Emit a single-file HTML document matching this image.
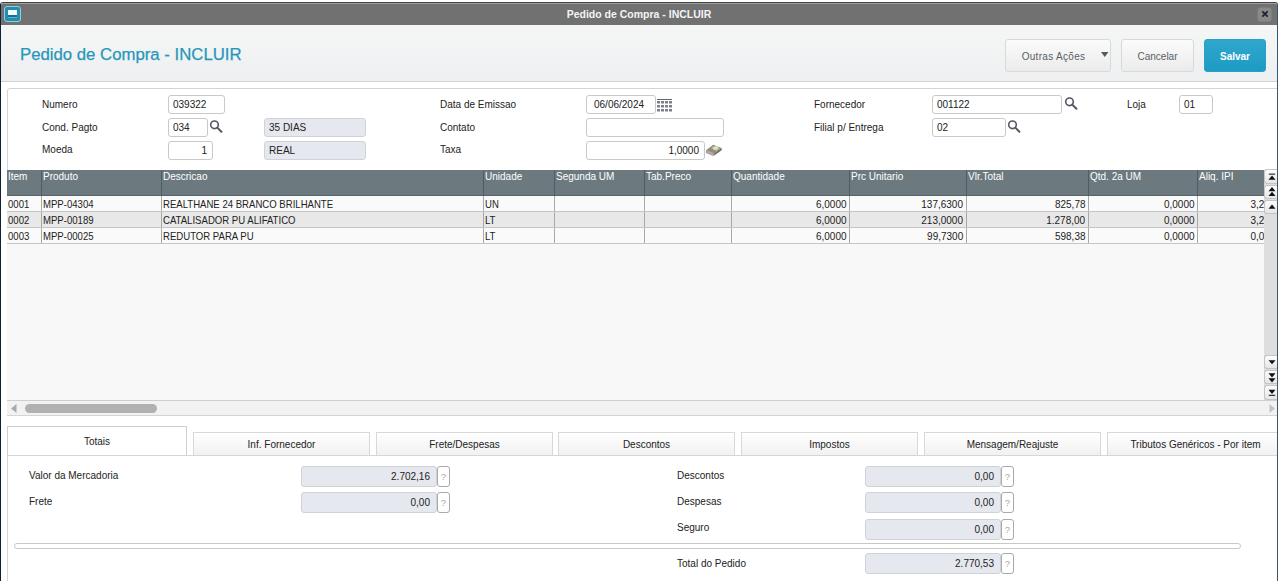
<!DOCTYPE html>
<html><head><meta charset="utf-8">
<style>
*{margin:0;padding:0;box-sizing:border-box}
html,body{width:1280px;height:581px;overflow:hidden;background:#fff;font-family:"Liberation Sans",sans-serif;font-size:10px;color:#222}
div,span,svg{position:absolute}
#win{left:0;top:2px;width:1278px;height:579px;border:1px solid #444;border-bottom:none;background:#fff;border-radius:3px 3px 0 0}
#tb{left:1px;top:3px;width:1276px;height:22px;border-radius:2px 2px 0 0;background:#717171;border-top:1px solid #9e9e9e}
#tbt{left:0;top:4px;width:1276px;text-align:center;color:#f4f4f4;font-weight:bold;font-size:10.5px;line-height:12px}
#hdr{left:1px;top:25px;width:1276px;height:57px;background:linear-gradient(#f5f6f6,#eeeff0);border-bottom:1px solid #d3d3d3}
#ttl{left:20px;top:45px;font-size:16.75px;line-height:19px;color:#2797ba;-webkit-text-stroke:0.25px #2797ba;white-space:nowrap}
.btn{top:39px;height:33px;border:1px solid #d9d9d9;border-radius:3px;background:linear-gradient(#fbfbfb,#ebebeb);font-size:10px;color:#5a5e66;text-align:center;line-height:33px}
.lbl{font-size:10px;line-height:12px;color:#222;white-space:nowrap;margin-top:1px}
.inp{height:19px;border:1px solid #c9c9c9;border-radius:3px;background:#fff;font-size:10px;padding:0 5px 0 4px;line-height:18px;white-space:nowrap;color:#222}
.gry{background:#e5e8ee;border-color:#cfd3d8}
.r{text-align:right;padding-right:5px}
.srch{width:14px;height:14px}
/* grid */
#grid{left:7px;top:170px;width:1257px;height:231px;background:#f8f8f8;overflow:hidden}
#gh{left:0;top:0;width:1257px;height:26px;background:#6c7a80;border-bottom:1px solid #56646a}
.gh{top:0;height:26px;color:#fff;font-size:10px;line-height:12px;padding:1px 0 0 1px;border-left:1px solid #4f5d62;white-space:nowrap;overflow:hidden}
.row{left:0;width:1257px;height:16px;border-bottom:1px solid #c5c5c5}
.c{top:0;height:15px;font-size:10.3px;line-height:15px;padding:1px 3px 0 1px;border-left:1px solid #a8a8a8;white-space:nowrap;overflow:hidden;color:#222}
.c.r{text-align:right}
.c i{font-style:normal;display:inline-block;transform:scaleX(.93);transform-origin:0 50%}
.c.r i{transform:scaleX(.97);transform-origin:100% 50%}
.vsb{left:1264px;width:13px;height:14px;border:1px solid #c4c4c4;border-right:none;border-radius:3px 0 0 3px;background:linear-gradient(#fdfdfd,#e6e6e6)}
/* tabs */
.tab{top:432px;height:23px;border:1px solid #d8d8d8;border-bottom:none;background:linear-gradient(#ffffff,#f1f1f1);font-size:10px;line-height:12px;text-align:center;padding-top:6px;color:#222;white-space:nowrap}
.fld{height:21px;border:1px solid #cfd3d8;border-radius:3px;background:#e5e8ee;font-size:10px;line-height:16px;padding-top:2px;text-align:right;padding-right:6px;color:#222}
.q{width:13px;height:21px;border:1px solid #a9a9a9;border-radius:3px;background:#fff;font-size:9.5px;line-height:19px;text-align:center;color:#a5a5a5}
</style></head><body>
<div id="win"></div>
<div id="tb"><div id="tbt">Pedido de Compra - INCLUIR</div></div>
<!-- window icon -->
<div style="left:4px;top:6px;width:17px;height:16px;border:1px solid #86d2ea;border-radius:3px;background:#2a8cab"></div>
<div style="left:8px;top:10px;width:9px;height:5px;background:#f4fbfd"></div>
<div style="left:8px;top:15px;width:9px;height:2px;background:#17708c"></div>
<div style="left:8px;top:17px;width:9px;height:1px;background:#5fb3cc"></div>
<!-- close -->
<div style="left:1257px;top:7px;width:15px;height:15px;border:1px solid #7c7c7c;border-radius:3px;background:#898989"></div>
<svg style="left:1261px;top:10px" width="8" height="8" viewBox="0 0 8 8"><path d="M1.3 1.3L6.7 6.7M6.7 1.3L1.3 6.7" stroke="#1b2035" stroke-width="1.7"/></svg>

<div id="hdr"></div>
<div id="ttl">Pedido de Compra - INCLUIR</div>
<div class="btn" style="left:1005px;width:106px;padding-right:9px;letter-spacing:0.3px">Outras Ações</div>
<svg style="left:1101px;top:52px" width="8" height="6" viewBox="0 0 8 6"><path d="M0 0H7.5L3.75 5z" fill="#555a60"/></svg>
<div class="btn" style="left:1121px;width:73px">Cancelar</div>
<div class="btn" style="left:1204px;width:62px;background:linear-gradient(#2fa7cd,#1d9bc4);border-color:#2aa0c6;color:#fff;font-weight:bold">Salvar</div>

<!-- form panel -->
<div style="left:7px;top:88px;width:1275px;height:90px;border:1px solid #d4d4d4;border-radius:3px;background:#fff"></div>
<div class="lbl" style="left:42px;top:98px">Numero</div>
<div class="inp" style="left:168px;top:95px;width:57px">039322</div>
<div class="lbl" style="left:42px;top:121px">Cond. Pagto</div>
<div class="inp" style="left:168px;top:118px;width:40px">034</div>
<svg class="srch" style="left:209px;top:119px" viewBox="0 0 14 14"><circle cx="5.5" cy="5.8" r="3.8" fill="none" stroke="#525862" stroke-width="1.6"/><path d="M8.3 8.6L12.4 12.7" stroke="#525862" stroke-width="2" stroke-linecap="round"/></svg>
<div class="inp gry" style="left:264px;top:118px;width:102px">35 DIAS</div>
<div class="lbl" style="left:42px;top:143px">Moeda</div>
<div class="inp r" style="left:168px;top:141px;width:45px">1</div>
<div class="inp gry" style="left:264px;top:141px;width:102px">REAL</div>

<div class="lbl" style="left:440px;top:98px">Data de Emissao</div>
<div class="inp" style="left:586px;top:95px;width:70px;padding-left:7px">06/06/2024</div>
<svg style="left:657px;top:99px" width="16" height="13" viewBox="0 0 16 13"><rect x="0" y="0" width="15" height="1" fill="#666"/><g fill="#7d8088"><rect x="0" y="2" width="3" height="2.5"/><rect x="4" y="2" width="3" height="2.5"/><rect x="8" y="2" width="3" height="2.5"/><rect x="12" y="2" width="3" height="2.5"/><rect x="0" y="6" width="3" height="2.5"/><rect x="4" y="6" width="3" height="2.5"/><rect x="8" y="6" width="3" height="2.5"/><rect x="12" y="6" width="3" height="2.5"/><rect x="0" y="10" width="3" height="2.5"/><rect x="4" y="10" width="3" height="2.5"/><rect x="8" y="10" width="3" height="2.5"/><rect x="12" y="10" width="3" height="2.5"/></g></svg>
<div class="lbl" style="left:440px;top:121px">Contato</div>
<div class="inp" style="left:586px;top:118px;width:138px"></div>
<div class="lbl" style="left:440px;top:143px">Taxa</div>
<div class="inp r" style="left:586px;top:141px;width:119px">1,0000</div>
<svg style="left:705px;top:143px" width="18" height="15" viewBox="0 0 18 15"><path d="M1 7.3L8.2 1.7L16.6 5.1L9 10.5Z" fill="#948a84"/><path d="M1 7.3L9 10.5L8.5 13L1 10Z" fill="#a4959a"/><path d="M9 10.5L16.6 5.1L16.6 7.3L8.5 13Z" fill="#6f6763"/><path d="M2 8.6L8.6 11.2L8.5 11.8L2 9.2Z" fill="#cbbcc0"/><path d="M6 5.2L9 3L15 5.3L11.5 8Z" fill="#b6c58f"/><ellipse cx="10.8" cy="4.9" rx="2.6" ry="1.5" transform="rotate(-20 10.8 4.9)" fill="#dfeac1"/></svg>

<div class="lbl" style="left:814px;top:98px">Fornecedor</div>
<div class="inp" style="left:932px;top:95px;width:130px">001122</div>
<svg class="srch" style="left:1064px;top:96px" viewBox="0 0 14 14"><circle cx="5.5" cy="5.8" r="3.8" fill="none" stroke="#525862" stroke-width="1.6"/><path d="M8.3 8.6L12.4 12.7" stroke="#525862" stroke-width="2" stroke-linecap="round"/></svg>
<div class="lbl" style="left:1127px;top:98px">Loja</div>
<div class="inp" style="left:1179px;top:95px;width:34px">01</div>
<div class="lbl" style="left:814px;top:121px">Filial p/ Entrega</div>
<div class="inp" style="left:932px;top:118px;width:74px">02</div>
<svg class="srch" style="left:1007px;top:119px" viewBox="0 0 14 14"><circle cx="5.5" cy="5.8" r="3.8" fill="none" stroke="#525862" stroke-width="1.6"/><path d="M8.3 8.6L12.4 12.7" stroke="#525862" stroke-width="2" stroke-linecap="round"/></svg>

<!-- grid -->
<div id="grid">
  <div id="gh">
    <div class="gh" style="left:0;width:34px;border-left:none">Item</div>
    <div class="gh" style="left:34px;width:120px">Produto</div>
    <div class="gh" style="left:154px;width:322px">Descricao</div>
    <div class="gh" style="left:476px;width:71px">Unidade</div>
    <div class="gh" style="left:547px;width:90px">Segunda UM</div>
    <div class="gh" style="left:637px;width:87px">Tab.Preco</div>
    <div class="gh" style="left:724px;width:118px">Quantidade</div>
    <div class="gh" style="left:842px;width:117px">Prc Unitario</div>
    <div class="gh" style="left:959px;width:122px">Vlr.Total</div>
    <div class="gh" style="left:1081px;width:109px">Qtd. 2a UM</div>
    <div class="gh" style="left:1190px;width:80px">Aliq. IPI</div>
  </div>
  <div class="row" style="top:26px;background:#fafafa">
    <div class="c" style="left:0;width:34px;border-left:none"><i>0001</i></div>
    <div class="c" style="left:34px;width:120px"><i>MPP-04304</i></div>
    <div class="c" style="left:154px;width:322px"><i>REALTHANE 24 BRANCO BRILHANTE</i></div>
    <div class="c" style="left:476px;width:71px"><i>UN</i></div>
    <div class="c" style="left:547px;width:90px"></div>
    <div class="c" style="left:637px;width:87px"></div>
    <div class="c r" style="left:724px;width:118px"><i>6,0000</i></div>
    <div class="c r" style="left:842px;width:117px"><i>137,6300</i></div>
    <div class="c r" style="left:959px;width:122px"><i>825,78</i></div>
    <div class="c r" style="left:1081px;width:109px"><i>0,0000</i></div>
    <div class="c r" style="left:1190px;width:67px;padding-right:0"><i>3,2</i></div>
  </div>
  <div class="row" style="top:42px;background:#e8e8e8">
    <div class="c" style="left:0;width:34px;border-left:none"><i>0002</i></div>
    <div class="c" style="left:34px;width:120px"><i>MPP-00189</i></div>
    <div class="c" style="left:154px;width:322px"><i>CATALISADOR PU ALIFATICO</i></div>
    <div class="c" style="left:476px;width:71px"><i>LT</i></div>
    <div class="c" style="left:547px;width:90px"></div>
    <div class="c" style="left:637px;width:87px"></div>
    <div class="c r" style="left:724px;width:118px"><i>6,0000</i></div>
    <div class="c r" style="left:842px;width:117px"><i>213,0000</i></div>
    <div class="c r" style="left:959px;width:122px"><i>1.278,00</i></div>
    <div class="c r" style="left:1081px;width:109px"><i>0,0000</i></div>
    <div class="c r" style="left:1190px;width:67px;padding-right:0"><i>3,2</i></div>
  </div>
  <div class="row" style="top:58px;background:#fafafa">
    <div class="c" style="left:0;width:34px;border-left:none"><i>0003</i></div>
    <div class="c" style="left:34px;width:120px"><i>MPP-00025</i></div>
    <div class="c" style="left:154px;width:322px"><i>REDUTOR PARA PU</i></div>
    <div class="c" style="left:476px;width:71px"><i>LT</i></div>
    <div class="c" style="left:547px;width:90px"></div>
    <div class="c" style="left:637px;width:87px"></div>
    <div class="c r" style="left:724px;width:118px"><i>6,0000</i></div>
    <div class="c r" style="left:842px;width:117px"><i>99,7300</i></div>
    <div class="c r" style="left:959px;width:122px"><i>598,38</i></div>
    <div class="c r" style="left:1081px;width:109px"><i>0,0000</i></div>
    <div class="c r" style="left:1190px;width:67px;padding-right:0"><i>0,0</i></div>
  </div>
</div>
<!-- vertical scrollbar -->
<div style="left:1264px;top:170px;width:13px;height:231px;background:#dedede"></div>
<div class="vsb" style="top:169px;height:15px"></div>
<div class="vsb" style="top:185px"></div>
<div class="vsb" style="top:200px"></div>
<div class="vsb" style="top:355px"></div>
<div class="vsb" style="top:370px"></div>
<div class="vsb" style="top:385px;height:15px"></div>
<svg style="left:1268px;top:173px" width="8" height="40" viewBox="0 0 8 40"><rect x="0.8" y="0.5" width="6.4" height="1.3" fill="#444"/><path d="M4 2.4L7.5 6.8H0.5Z" fill="#111"/><path d="M4 14L7.5 18.2H0.5Z M4 18.8L7.5 23H0.5Z" fill="#111"/><path d="M4 31.6L7.5 35.8H0.5Z" fill="#111"/></svg>
<svg style="left:1268px;top:359.5px" width="8" height="40" viewBox="0 0 8 40"><path d="M0.5 0.2H7.5L4 4.2Z" fill="#111"/><path d="M0.5 13.3H7.5L4 17.5Z M0.5 18.3H7.5L4 22.5Z" fill="#111"/><path d="M0.5 29.8H7.5L4 34Z" fill="#111"/><rect x="0.8" y="34.8" width="6.4" height="1.1" fill="#222"/></svg>
<!-- horizontal scrollbar -->
<div style="left:7px;top:400px;width:1270px;height:16px;background:#f2f2f2;border-top:1px solid #cfcfcf;border-bottom:1px solid #d4d4d4"></div>
<svg style="left:11px;top:404px" width="6" height="9" viewBox="0 0 6 9"><path d="M5.5 0V9L0 4.5Z" fill="#a9a9a9"/></svg>
<div style="left:25px;top:404px;width:132px;height:9px;border-radius:5px;background:#b1b1b1"></div>
<svg style="left:1269px;top:404px" width="6" height="9" viewBox="0 0 6 9"><path d="M0.5 0V9L6 4.5Z" fill="#c4c4c4"/></svg>

<!-- tabs -->
<div style="left:7px;top:455px;width:1275px;height:130px;border:1px solid #d6d6d6;background:#fff"></div>
<div class="tab" style="left:7px;top:426px;height:30px;width:180px;border-color:#cfcfcf;background:#fff;padding-top:9px">Totais</div>
<div class="tab" style="left:193px;width:177px">Inf. Fornecedor</div>
<div class="tab" style="left:376px;width:177px">Frete/Despesas</div>
<div class="tab" style="left:558px;width:177px">Descontos</div>
<div class="tab" style="left:741px;width:177px">Impostos</div>
<div class="tab" style="left:924px;width:177px">Mensagem/Reajuste</div>
<div class="tab" style="left:1107px;width:177px">Tributos Genéricos - Por item</div>

<div style="left:7px;top:455px;width:1270px;height:1px;background:#d6d6d6"></div>
<div class="lbl" style="left:29px;top:469px">Valor da Mercadoria</div>
<div class="fld" style="left:301px;top:466px;width:136px">2.702,16</div>
<div class="q" style="left:437px;top:466px">?</div>
<div class="lbl" style="left:29px;top:495px">Frete</div>
<div class="fld" style="left:301px;top:492px;width:136px">0,00</div>
<div class="q" style="left:437px;top:492px">?</div>

<div class="lbl" style="left:677px;top:469px">Descontos</div>
<div class="fld" style="left:865px;top:466px;width:136px">0,00</div>
<div class="q" style="left:1001px;top:466px">?</div>
<div class="lbl" style="left:677px;top:495px">Despesas</div>
<div class="fld" style="left:865px;top:492px;width:136px">0,00</div>
<div class="q" style="left:1001px;top:492px">?</div>
<div class="lbl" style="left:677px;top:521px">Seguro</div>
<div class="fld" style="left:865px;top:519px;width:136px">0,00</div>
<div class="q" style="left:1001px;top:519px">?</div>
<div style="left:14px;top:543px;width:1227px;height:6px;border:1px solid #c8c8c8;border-radius:3px;background:#fff"></div>
<div class="lbl" style="left:677px;top:557px">Total do Pedido</div>
<div class="fld" style="left:865px;top:553px;width:136px">2.770,53</div>
<div class="q" style="left:1001px;top:553px">?</div>

<!-- window borders on top -->
<div style="left:0;top:4px;width:1px;height:577px;background:#0f2233"></div>
<div style="left:1277px;top:4px;width:1px;height:577px;background:#3a5676"></div>
<div style="left:1278px;top:0;width:2px;height:581px;background:#fff"></div>
</body></html>
